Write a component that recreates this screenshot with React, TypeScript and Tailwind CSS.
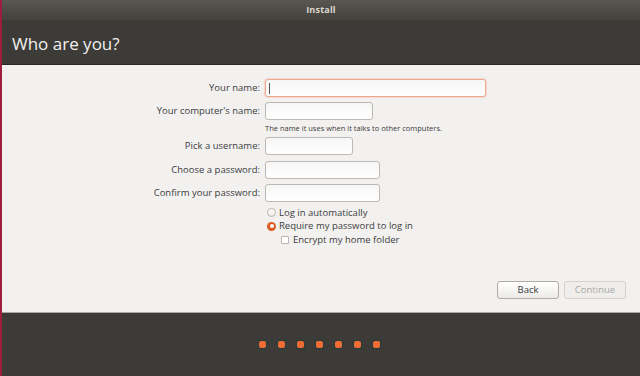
import React from 'react';

const font = { fontFamily: '"Open Sans", "DejaVu Sans", sans-serif' };

function Field({ label, width, focused }: { label: string; width: string; focused?: boolean }) {
  return (
    <div className="flex items-center h-[18px]">
      <div className="w-[259px] pr-[1px] text-right text-[9.5px] text-[#3c3c3c] leading-none">{label}</div>
      <div
        className={`ml-[4px] h-[18px] ${width} rounded-[3px] border bg-gradient-to-b from-[#f6f6f6] to-white ${
          focused ? 'border-[#eea68c] shadow-[0_0_1px_1px_rgba(240,140,100,0.25)]' : 'border-[#bdb8b2]'
        } flex items-center`}
      >
        {focused && <div className="ml-[3px] w-[1px] h-[11px] bg-[#555]" />}
      </div>
    </div>
  );
}

export default function App() {
  return (
    <div className="w-[640px] h-[376px] flex flex-col overflow-hidden bg-[#3c3b37] border-l-2 border-[#9c1d3d]" style={font}>
      {/* Title bar */}
      <div className="h-[20px] bg-gradient-to-b from-[#5a5651] to-[#44423d] flex items-center justify-center">
        <span className="text-[9px] font-bold text-[#dcd8d0] tracking-[0.2px]">Install</span>
      </div>

      {/* Header */}
      <div className="h-[45px] bg-[#3c3b37] flex items-center pl-[10px] pt-[2px] border-b border-[#2a2926]">
        <h1 className="text-[17px] text-[#f2f1f0] leading-none">Who are you?</h1>
      </div>

      {/* Content */}
      <div className="h-[248px] bg-[#f2f1f0] flex flex-col border-b border-[#a9a7a3]">
        <div className="flex flex-col pt-[14px]">
          <Field label="Your name:" width="w-[221px]" focused />
          <div className="h-[5px]" />
          <Field label="Your computer's name:" width="w-[108px]" />
          <div className="pl-[263px] h-[17px] flex items-center text-[7.5px] text-[#3c3c3c]">
            The name it uses when it talks to other computers.
          </div>
          <Field label="Pick a username:" width="w-[88px]" />
          <div className="h-[6px]" />
          <Field label="Choose a password:" width="w-[115px]" />
          <div className="h-[5px]" />
          <Field label="Confirm your password:" width="w-[115px]" />

          <div className="pl-[265px] pt-[4px] flex flex-col text-[9.5px] text-[#3c3c3c] leading-none">
            <div className="flex items-center h-[13px] gap-[3px]">
              <div className="w-[9px] h-[9px] rounded-full border border-[#b8b3ad] bg-gradient-to-b from-white to-[#ecebea]" />
              <span>Log in automatically</span>
            </div>
            <div className="flex items-center h-[14px] gap-[3px]">
              <div className="w-[9px] h-[9px] rounded-full bg-[#de5b24] flex items-center justify-center">
                <div className="w-[4px] h-[4px] rounded-full bg-white" />
              </div>
              <span>Require my password to log in</span>
            </div>
            <div className="flex items-center h-[14px] gap-[4px] pl-[14px]">
              <div className="w-[8px] h-[8px] rounded-[1px] border border-[#b8b3ad] bg-white" />
              <span>Encrypt my home folder</span>
            </div>
          </div>
        </div>

        <div className="mt-auto mb-[13px] flex justify-end gap-[5px] pr-[14px]">
          <button className="w-[62px] h-[18px] rounded-[3px] border border-[#b0aba5] bg-gradient-to-b from-white to-[#ebeae8] text-[9.5px] text-[#3c3c3c] leading-none">
            Back
          </button>
          <button className="w-[62px] h-[18px] rounded-[3px] border border-[#d4d0cb] bg-[#efeeec] text-[9.5px] text-[#a8a6a3] leading-none">
            Continue
          </button>
        </div>
      </div>

      {/* Slideshow dots */}
      <div className="flex-1 flex items-center justify-center gap-[12px] pr-[3px]">
        {[0, 1, 2, 3, 4, 5, 6].map((i) => (
          <div key={i} className="w-[7px] h-[7px] rounded-[2px] bg-[#ef6d34] shadow-[0_0_1px_1px_rgba(20,60,60,0.5)]" />
        ))}
      </div>
    </div>
  );
}
